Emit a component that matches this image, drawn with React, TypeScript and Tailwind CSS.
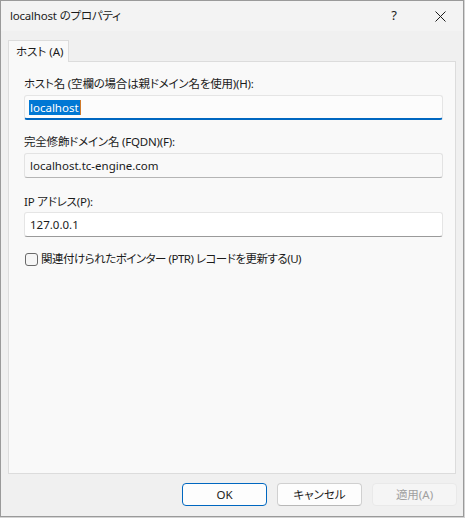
import React from 'react';

const font = { fontFamily: '"Noto Sans", "Noto Sans CJK JP", sans-serif' };

function Field({ label, children }: { label: string; children: React.ReactNode }) {
  return (
    <div className="flex flex-col">
      <div className="h-[16px] leading-[16px] text-[11.5px] text-[#1b1b1b] whitespace-nowrap tracking-[-0.2px]">{label}</div>
      {children}
    </div>
  );
}

function DialogButton({ label, variant }: { label: string; variant: 'default' | 'normal' | 'disabled' }) {
  const cls =
    variant === 'default'
      ? 'border-[#0067c0] bg-[#fdfdfd] text-[#1b1b1b]'
      : variant === 'normal'
      ? 'border-[#d0d0d0] border-b-[#b8b8b8] bg-[#fdfdfd] text-[#1b1b1b]'
      : 'border-[#e9e9e9] bg-[#f5f5f5] text-[#a0a0a0]';
  return (
    <button
      className={`w-[85px] h-[23px] rounded-[4px] border text-[11.5px] leading-[16px] flex items-center justify-center ${cls}`}
    >
      {label}
    </button>
  );
}

export default function App() {
  return (
    <div className="w-[465px] h-[518px] bg-[#d4d4d4] [font-feature-settings:'palt']" style={font}>
      <div className="w-[464px] h-[517px] bg-[#f0f0f0] border border-[#9a9a9a] flex flex-col">
        {/* title bar */}
        <div className="h-[30px] flex items-center bg-[#f3f3f3]">
          <div className="pl-[9px] flex-1 text-[11.5px] leading-[16px] text-[#1b1b1b] tracking-[-0.2px]">localhost のプロパティ</div>
          <div className="w-[46px] h-full flex items-center justify-center text-[13px] text-[#1b1b1b]">?</div>
          <div className="w-[46px] h-full flex items-center justify-center">
            <svg width="11" height="11" viewBox="0 0 11 11">
              <path d="M0.5 0.5 L10.5 10.5 M10.5 0.5 L0.5 10.5" stroke="#1b1b1b" strokeWidth="1" fill="none" />
            </svg>
          </div>
        </div>

        {/* tabs */}
        <div className="pt-[9px] px-[7px]">
          <div className="w-[61px] h-[22px] bg-[#f9f9f9] border border-b-0 border-[#dcdcdc] -mb-px relative z-10 flex items-center pl-[7px] text-[11.5px] leading-[16px] text-[#1b1b1b] whitespace-nowrap">
            ホスト (A)
          </div>
          <div className="h-[413px] bg-[#f9f9f9] border border-[#dcdcdc] pt-[14px] pl-[15px] pr-[12px] flex flex-col">
            <Field label="ホスト名 (空欄の場合は親ドメイン名を使用)(H):">
              <div className="mt-[3px] h-[25px] rounded-[3px] border border-[#e5e5e5] border-b-2 border-b-[#0067c0] bg-[#fcfcfc] flex items-center pl-[4px]">
                <span className="bg-[#0078d4] text-white text-[11.5px] leading-[15px] px-px">localhost</span>
                <span className="w-px h-[15px] bg-[#d07a2a]" />
              </div>
            </Field>
            <div className="mt-[14px]">
              <Field label="完全修飾ドメイン名 (FQDN)(F):">
                <div className="mt-[3px] h-[25px] rounded-[3px] border border-[#e3e3e3] border-b-[#b5b5b5] bg-[#f9f9f9] flex items-center pl-[5px] text-[11.5px] text-[#1b1b1b]">
                  localhost.tc-engine.com
                </div>
              </Field>
            </div>
            <div className="mt-[16px]">
              <Field label="IP アドレス(P):">
                <div className="mt-[2px] h-[25px] rounded-[3px] border border-[#e5e5e5] border-b-[#9a9a9a] bg-white flex items-center pl-[5px] text-[11.5px] text-[#1b1b1b]">
                  127.0.0.1
                </div>
              </Field>
            </div>
            <label className="mt-[14px] h-[16px] flex items-center gap-[3px] pl-px text-[11.5px] leading-[16px] text-[#1b1b1b] whitespace-nowrap tracking-[-0.5px]">
              <span className="w-[13px] h-[13px] rounded-[3px] border border-[#6a6a6a] bg-[#f6f6f6]" />
              関連付けられたポインター (PTR) レコードを更新する(U)
            </label>
          </div>
        </div>

        {/* buttons */}
        <div className="mt-[9px] pr-[6px] flex justify-end gap-[10px]">
          <DialogButton label="OK" variant="default" />
          <DialogButton label="キャンセル" variant="normal" />
          <DialogButton label="適用(A)" variant="disabled" />
        </div>
      </div>
    </div>
  );
}
